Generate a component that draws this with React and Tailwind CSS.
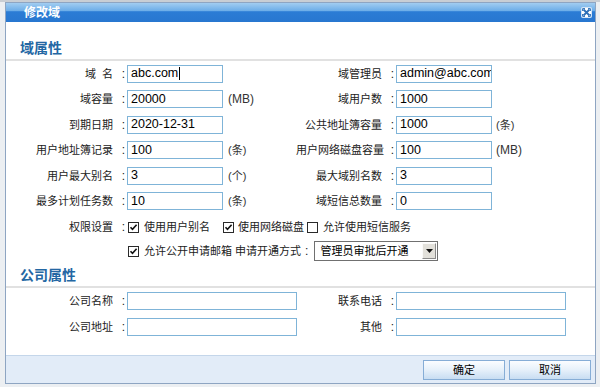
const fontCls = "font-['Liberation_Sans','Noto_Sans_CJK_SC',sans-serif]";

const leftRows = [
  { label: "域\u00a0\u00a0名", value: "abc.com", caret: true },
  { label: "域容量", value: "20000", unit: "(MB)" },
  { label: "到期日期", value: "2020-12-31" },
  { label: "用户地址簿记录", value: "100", unit: "(条)" },
  { label: "用户最大别名", value: "3", unit: "(个)" },
  { label: "最多计划任务数", value: "10", unit: "(条)" },
];

const rightRows = [
  { label: "域管理员", value: "admin@abc.com" },
  { label: "域用户数", value: "1000" },
  { label: "公共地址簿容量", value: "1000", unit: "(条)" },
  { label: "用户网络磁盘容量", value: "100", unit: "(MB)" },
  { label: "最大域别名数", value: "3" },
  { label: "域短信总数量", value: "0" },
];

function Label({ text, width }) {
  return (
    <div className={`flex flex-none justify-end items-center whitespace-nowrap text-[11px] text-[#222] ${width}`}>
      <span>{text}</span>
      <span className="w-[14px] text-right pr-[2px] text-[12px]">:</span>
    </div>
  );
}

function TextBox({ value, caret, width }) {
  return (
    <div className={`flex flex-none items-center h-[18px] border border-[#7fb4d8] bg-white pl-[3px] overflow-hidden whitespace-nowrap text-[12.5px] text-black ${width}`}>
      <span>{value}</span>
      {caret && <span className="w-px h-[13px] bg-black ml-[1px]" />}
    </div>
  );
}

function Unit({ text, className }) {
  if (!text) return null;
  const latin = text === "(MB)";
  return (
    <span className={`whitespace-nowrap text-[#333] ${latin ? "text-[12px]" : "text-[11px]"} ${className}`}>{text}</span>
  );
}

function Check({ checked }) {
  return (
    <span className="flex flex-none items-center justify-center w-[11px] h-[11px] border border-[#2a2a2a] bg-white">
      {checked && (
        <svg width="9" height="9" viewBox="0 0 9 9">
          <path d="M1.5 4.2 L3.5 6.4 L7.6 1.8" fill="none" stroke="#111" strokeWidth="1.6" />
        </svg>
      )}
    </span>
  );
}

function SectionTitle({ text, height }) {
  return (
    <div className={`flex items-end pl-[14px] pb-[1px] border-b-2 border-[#e1e1e1] ${height}`}>
      <span className="text-[14px] leading-[20px] font-bold text-[#2467a3]">{text}</span>
    </div>
  );
}

function CloseIcon() {
  return (
    <svg width="11" height="11" viewBox="0 0 11 11">
      <rect x="0.5" y="0.5" width="10" height="10" rx="1" fill="#ffffff" stroke="#cfe2f5" />
      <path d="M2.5 2.5 L8.5 8.5 M8.5 2.5 L2.5 8.5" stroke="#2c6fb8" strokeWidth="1.8" />
      <path d="M1.6 1.6h2.4M1.6 1.6v2.4M9.4 1.6h-2.4M9.4 1.6v2.4M1.6 9.4h2.4M1.6 9.4v-2.4M9.4 9.4h-2.4M9.4 9.4v-2.4" stroke="#2c6fb8" strokeWidth="1" />
    </svg>
  );
}

function Button({ text }) {
  return (
    <button className="w-[82px] h-[20px] border border-[#86add6] bg-[linear-gradient(to_bottom,#fbfdff_0%,#e6f0fa_50%,#c8ddf2_100%)] text-[11px] text-black">
      {text}
    </button>
  );
}

export default function App() {
  return (
    <div className={`w-[600px] h-[387px] bg-[#eceff2] overflow-hidden ${fontCls}`}>
      <div className="h-[2px] bg-[#c9ced4]" />
      <div className="ml-[5px] w-[591px] h-[382px] flex flex-col border border-[#8ea5c2] bg-white">
        {/* title bar */}
        <div className="flex items-center justify-between h-[19px] bg-[linear-gradient(to_bottom,#a2cdf1_0%,#6eaee8_40%,#2b7cd5_46%,#2877d0_100%)]">
          <span className="pl-[18px] text-[12px] font-bold text-white">修改域</span>
          <span className="mr-[3px] flex">
            <CloseIcon />
          </span>
        </div>

        <SectionTitle text="域属性" height="h-[39px]" />

        {leftRows.map((l, i) => {
          const r = rightRows[i];
          return (
            <div key={i} className="flex items-center h-[25.5px]">
              <div className="flex items-center w-[290px] flex-none">
                <Label text={l.label} width="w-[121px]" />
                <TextBox value={l.value} caret={l.caret} width="w-[96px]" />
                <Unit text={l.unit} className="ml-[5px]" />
              </div>
              <Label text={r.label} width="w-[100px]" />
              <TextBox value={r.value} width="w-[96px]" />
              <Unit text={r.unit} className="ml-[4px]" />
            </div>
          );
        })}

        {/* permissions */}
        <div className="flex items-center h-[26px] text-[11px] text-[#222]">
          <Label text="权限设置" width="w-[121px]" />
          <span className="ml-[1px] flex"><Check checked /></span>
          <span className="ml-[5px] whitespace-nowrap">使用用户别名</span>
          <span className="ml-[13px] flex"><Check checked /></span>
          <span className="ml-[4px] whitespace-nowrap">使用网络磁盘</span>
          <span className="ml-[3px] flex"><Check /></span>
          <span className="ml-[5px] whitespace-nowrap">允许使用短信服务</span>
        </div>

        <div className="flex items-center h-[22px] text-[11px] text-[#222]">
          <span className="ml-[122px] flex"><Check checked /></span>
          <span className="ml-[5px] whitespace-nowrap">允许公开申请邮箱 申请开通方式</span>
          <span className="ml-[4px] text-[12px]">:</span>
          <div className="ml-[6px] flex items-center w-[124px] h-[20px] border border-[#707070] bg-white">
            <span className="flex-1 pl-[5px] whitespace-nowrap text-[11px] text-black">管理员审批后开通</span>
            <span className="flex items-center justify-center w-[14px] h-[16px] mr-[1px] bg-[#e2e0da] border border-t-[#fafafa] border-l-[#fafafa] border-b-[#8a8a8a] border-r-[#8a8a8a]">
              <svg width="7" height="4" viewBox="0 0 7 4">
                <path d="M0 0 H7 L3.5 4 Z" fill="#111" />
              </svg>
            </span>
          </div>
        </div>

        <SectionTitle text="公司属性" height="h-[26px]" />

        {[
          ["公司名称", "联系电话"],
          ["公司地址", "其他"],
        ].map(([a, b]) => (
          <div key={a} className="flex items-center h-[26px]">
            <div className="flex items-center w-[290px] flex-none">
              <Label text={a} width="w-[121px]" />
              <TextBox value="" width="w-[170px]" />
            </div>
            <Label text={b} width="w-[100px]" />
            <TextBox value="" width="w-[170px]" />
          </div>
        ))}

        <div className="flex-1" />

        {/* footer */}
        <div className="flex justify-end items-start gap-[4px] h-[28px] pt-[4px] pr-[4px] border-t border-[#c4d6ea] bg-[#e2ecf8]">
          <Button text="确定" />
          <Button text="取消" />
        </div>
      </div>
    </div>
  );
}
